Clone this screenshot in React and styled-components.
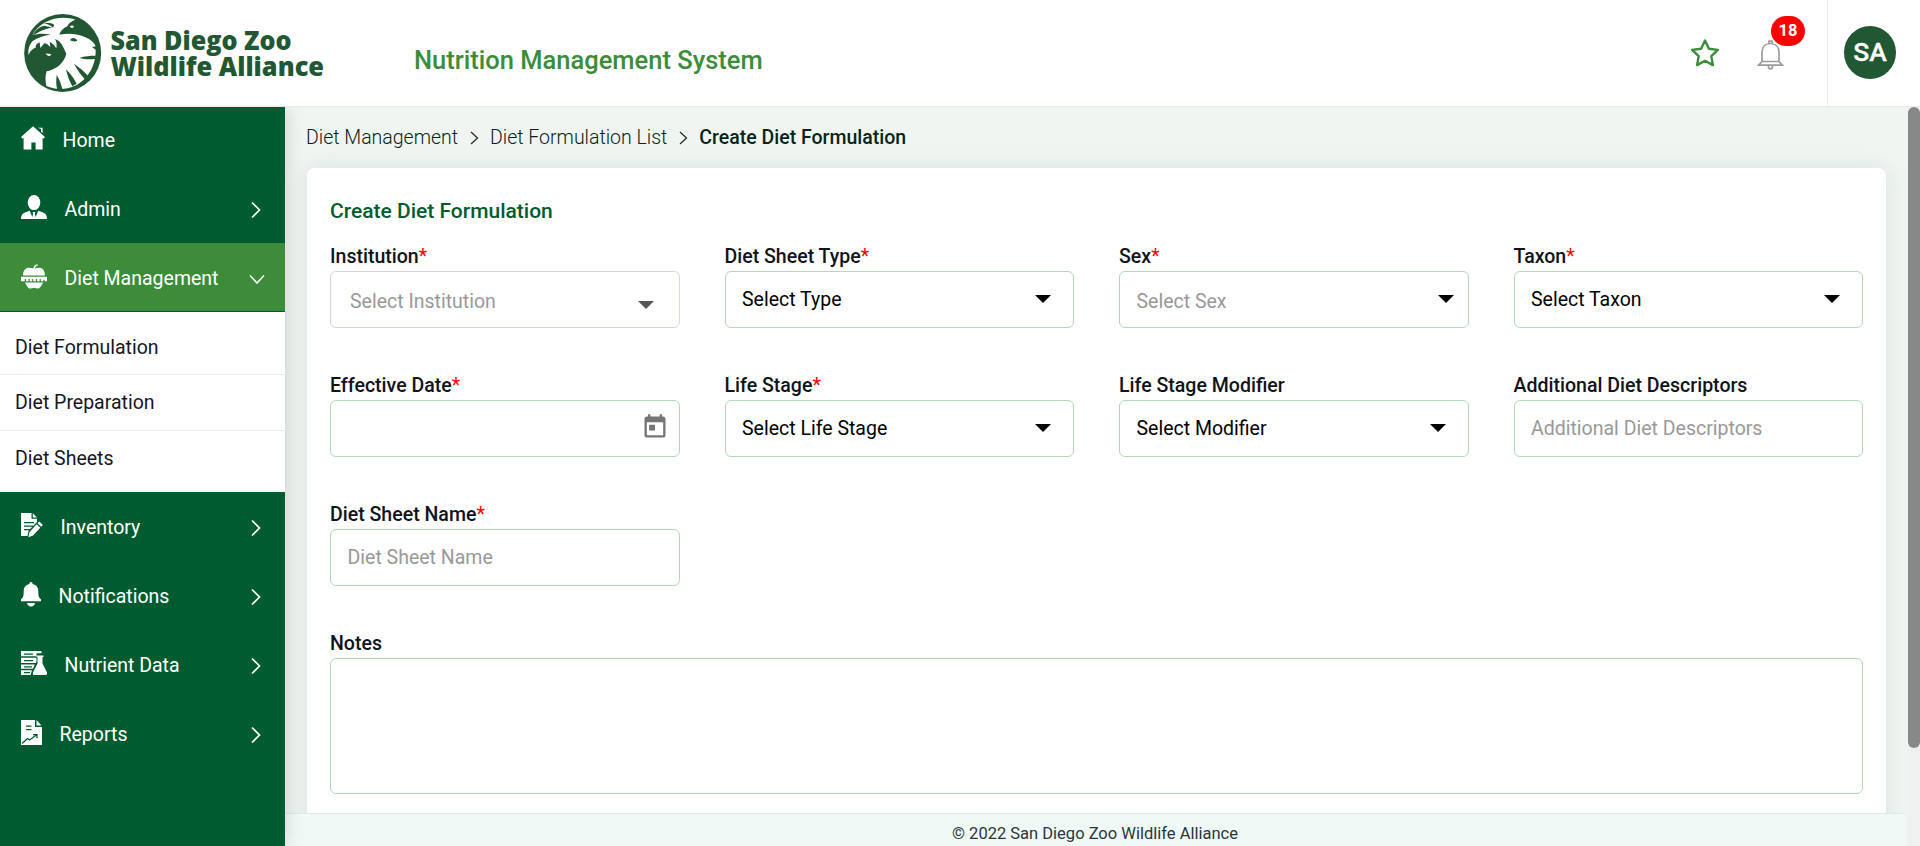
import React from "react";
import styled, { createGlobalStyle } from "styled-components";

const Global = createGlobalStyle`
  *, *::before, *::after { box-sizing: border-box; }
  html, body { margin: 0; padding: 0; background: #fff; overflow: hidden; }
  body { font-family: Roboto, "Liberation Sans", sans-serif; font-size: 20px; line-height: 24px; color: #0b1a14; }
`;

const Page = styled.div`
  width: 100%;
  height: 846px;
  display: flex;
  flex-direction: column;
  overflow: hidden;
`;

const Header = styled.header`
  height: 107px;
  flex: none;
  display: flex;
  align-items: flex-start;
  background: #fff;
  border-bottom: 1px solid #e8e8e8;
`;

const Logo = styled.svg`
  display: block;
  flex: none;
  width: 305px;
  height: 80px;
  margin: 13px 0 0 23px;
  overflow: visible;
`;

const SystemName = styled.h1`
  margin: 43px 0 0 86px;
  font-size: 25.5px;
  line-height: 34px;
  font-weight: 500;
  color: #3c8c3a;
`;

const HeaderTools = styled.div`
  margin-left: auto;
  display: flex;
  height: 105px;
`;

const StarIcon = styled.svg`
  display: block;
  width: 30px;
  height: 30px;
  margin: 38px 37px 0 0;
`;

const BellButton = styled.div`
  position: relative;
  width: 28px;
  height: 32px;
  margin: 39px 42px 0 0;
  svg { display: block; }
`;

const Badge = styled.span`
  position: absolute;
  left: 14px;
  top: -23px;
  width: 34px;
  height: 30px;
  border-radius: 15px;
  background: #ff0000;
  color: #fff;
  font-size: 16.5px;
  font-weight: 700;
  line-height: 29px;
  text-align: center;
`;

const AvatarCell = styled.div`
  width: 93px;
  border-left: 1px solid #ebebeb;
  padding: 26px 0 0 16px;
`;

const Avatar = styled.div`
  width: 52px;
  height: 53px;
  border-radius: 50%;
  background: #215732;
  color: #fff;
  font-size: 26.5px;
  font-weight: 500;
  -webkit-text-stroke: 0.3px #fff;
  line-height: 52px;
  text-align: center;
`;

const Body = styled.div`
  flex: 1;
  min-height: 0;
  display: flex;
`;

const Sidebar = styled.nav`
  position: relative;
  z-index: 2;
  width: 285px;
  flex: none;
  background: #005c30;
  box-shadow: 0 0 18px rgba(0, 0, 0, 0.16);
  clip-path: inset(0 -30px 0 0);
`;

const NavItem = styled.div`
  height: ${(p) => (p.$first ? 67 : 69)}px;
  display: flex;
  align-items: flex-start;
  padding: ${(p) => (p.$first ? 22 : 24)}px 0 0 21px;
  background: ${(p) => (p.$active ? "#3c8c3a" : "transparent")};
  border-bottom: 1px solid #005c30;
  color: #fff;
  font-size: 19.5px;
`;

const NavIcon = styled.svg`
  display: block;
  flex: none;
  margin: -3px 17.5px 0 0;
  fill: #fff;
`;

const NavLabel = styled.span`
  flex: 1;
`;

const Chevron = styled.svg`
  display: block;
  flex: none;
  width: 16px;
  height: 18px;
  margin: ${(p) => (p.$open ? "6px 20px 0 0" : "3px 21px 0 0")};
  fill: none;
  stroke: #fff;
  stroke-width: 1.6;
`;

const SubMenu = styled.div`
  height: 180px;
  background: #fff;
  padding-top: 7px;
`;

const SubItem = styled.div`
  height: 56px;
  padding: ${(p) => (p.$first ? 17 : 16)}px 0 0 15px;
  color: #17171f;
  font-size: 19.5px;
  border-bottom: 1px solid ${(p) => (p.$last ? "transparent" : "#e9ebea")};
`;

const Main = styled.main`
  flex: 1;
  min-width: 0;
  display: flex;
  flex-direction: column;
  background: #f0f5f1;
`;

const Scroll = styled.div`
  flex: 1;
  min-height: 0;
  overflow: hidden;
  padding: 19px 22px 0 22px;
`;

const Crumbs = styled.div`
  display: flex;
  align-items: center;
  height: 24px;
  margin-left: -1px;
  font-size: 19.5px;
  font-weight: 300;
  color: #05251b;
  b { font-weight: 500; }
`;

const CrumbChevron = styled.svg`
  display: block;
  width: 9px;
  height: 14px;
  margin: 0 11px 0 12px;
  fill: none;
  stroke: #1c332a;
  stroke-width: 1.3;
`;

const Card = styled.section`
  margin-top: 18px;
  height: 900px;
  background: #fff;
  border-radius: 8px;
  padding: 30px 23px 0;
  box-shadow: 0 0 24px rgba(120, 160, 170, 0.2);
`;

const CardTitle = styled.h2`
  margin: 0;
  font-size: 21px;
  line-height: 26px;
  font-weight: 500;
  color: #005c30;
`;

const Grid = styled.div`
  display: grid;
  grid-template-columns: repeat(4, 1fr);
  column-gap: 45px;
  grid-auto-rows: 129px;
  margin-top: 20px;
`;

const Label = styled.label`
  display: block;
  height: 27px;
  padding-top: 1px;
  font-size: 19.55px;
  font-weight: 500;
  color: #10131a;
  span { color: #ff0000; font-weight: 400; }
`;

const Control = styled.div`
  height: ${(p) => p.$h || 57}px;
  display: flex;
  align-items: flex-start;
  justify-content: space-between;
  background: #fff;
  border: 1px solid ${(p) => p.$border || "#b5d6b9"};
  border-radius: 6px;
  padding: ${(p) => p.$top || 16}px ${(p) => p.$right || 22}px 0 ${(p) => p.$left || 16.5}px;
  font-size: 19.5px;
  color: ${(p) => (p.$muted ? "#999" : "#000")};
`;

const Caret = styled.svg`
  display: block;
  width: 16px;
  height: 8px;
  margin-top: ${(p) => p.$drop || 7}px;
  fill: ${(p) => p.$fill || "#000"};
`;

const CalendarIcon = styled.svg`
  display: block;
  width: 28px;
  height: 28px;
  margin: -4px 0 0 auto;
  fill: #757575;
`;

const Footer = styled.footer`
  position: relative;
  height: 33px;
  flex: none;
  margin-right: 3px;
  background: #f0f9f5;
  border-top: 1px solid #e2ebe7;
  text-align: center;
  font-size: 16.5px;
  line-height: 39px;
  color: #2b3540;
`;

const ScrollTrack = styled.div`
  width: 12px;
  flex: none;
  background: #f0f0f0;
`;

const ScrollThumb = styled.div`
  height: 641px;
  border-radius: 6px;
  background: #888;
`;

const icons = {
  home: [24, 24, (
    <>
      <path d="M12 .3 24 11l-1.4 1.7-1-.9V23.500h-7V16.500h-4.200v7H2.600V11.800l-1 .9L0 11z" />
      <path d="M16.600 1.700H21.600V7.200l-1.600-1.500V3z" />
    </>
  )],
  user: [26, 24, (
    <>
      <ellipse cx="13" cy="7.600" rx="6.300" ry="7.500" />
      <path d="M0 24c.1-4 1.500-5.800 4.500-6.800l4.200-1.500L11.300 22l.9-3.500-.8-1.500h3.200l-.8 1.500.9 3.500 2.600-6.300 4.200 1.500c3 1 4.400 2.800 4.500 6.800z" />
    </>
  )],
  apple: [26, 25, (
    <>
      <path d="M12.300 4.500C12.600 2 14 .4 16.500.2l.4 1.300c-1.800.3-2.700 1.300-2.900 3 4.500-2 9.300-.7 9.800 5.300v1.600H2.100V9.800c.5-6 5.700-7.300 10.200-5.300z" />
      <path d="M0 12.700h26v4.600h-2.500v-1.500h-1.200v1.500h-2.500v-2.300h-1.200v2.300h-2.500v-2.300h-1.200v2.300h-2.500v-2.300h-1.200v2.300H8.700v-2.300H7.500v2.300H5v-2.300H3.800v2.300H0z" />
      <path d="M4 18.600h18c-.8 2.200-2 4-4 5.700-1.500.7-3-.1-5-.5-2 .4-3.500 1.200-5 .5-2-1.700-3.200-3.500-4-5.700z" />
    </>
  )],
  inventory: [22, 25, (
    <>
      <path d="M0 0h10.500v5.700H16V9l-8.400 8.600L6.500 23H0z" />
      <path d="M11.800.2 16 4.500h-4.200z" />
      <path d="M3 9h10v1.200H3zM3 12.500h9v1.200H3zM3 16h6v1.200H3z" fill="#005c30" />
      <path d="m18.300 8.500 3.600 3.500-1.700 1.800-3.700-3.500zM15.600 11.200l3.700 3.600-7.300 7.700-4.600 1.800 1-5z" />
    </>
  )],
  bell: [20, 25, (
    <>
      <path d="M10 0c1 0 1.600.7 1.600 2 3.900.8 5.700 3.600 5.700 7.500 0 4.500.5 6 2.700 7.800v2H0v-2c2.200-1.800 2.700-3.300 2.700-7.800C2.700 5.600 4.500 2.800 8.400 2c0-1.300.6-2 1.600-2z" />
      <path d="M6 21h8c-.4 2.300-1.800 3.500-4 3.500S6.400 23.300 6 21z" />
    </>
  )],
  nutrient: [26, 24, (
    <>
      <path d="M0 0h20.500v2.300h-5v2.900H0zM0 6.800h15.500v3.500L14.800 12H0zM0 13.600h13.800L12 17.800H0zM0 19.300h11L9.500 24H0z" />
      <path d="M3 2.500h9v1.200H3zM3 9h9v1.200H3zM3 15.300h8v1.200H3zM3 21h6v1.200H3z" fill="#005c30" />
      <path d="M15.500 4.500h7V6h-1v6.500L26 21.500c.5 1.500-.2 2.500-1.500 2.500h-11c-1.300 0-2-1-1.500-2.500l4.500-9V6h-1z" />
    </>
  )],
  reports: [21, 25, (
    <>
      <path d="M0 0h14v7h7v18H0z" />
      <path d="M15.500 0 20.500 5.500h-5z" />
      <path d="M5 5.500h5.500v1.300H5zM5 9h5.500v1.300H5z" fill="#005c30" />
      <path d="m1 23.500 5.500-5L8.500 20l7-5M12 14.600h4v3.600" fill="none" stroke="#005c30" strokeWidth="1.300" />
    </>
  )],
};

function Nav({ icon, label, active, first, chevron, open }) {
  const [w, h, art] = icons[icon];
  return (
    <NavItem $active={active} $first={first}>
      <NavIcon width={w} height={h} viewBox={`0 0 ${w} ${h}`}>{art}</NavIcon>
      <NavLabel>{label}</NavLabel>
      {chevron && (
        <Chevron $open={open} viewBox="0 0 16 18">
          <path d={open ? "M1 2.500 8 10l7-7.500" : "M4 1.500 11.500 9 4 16.500"} />
        </Chevron>
      )}
    </NavItem>
  );
}

function Field({ label, required, text, muted, caret, caretFill, drop, border, top, left, right, children }) {
  return (
    <div>
      <Label>{label}{required && <span>*</span>}</Label>
      <Control $muted={muted} $border={border} $top={top} $left={left} $right={right}>
        {text}
        {caret && (
          <Caret $drop={drop} $fill={caretFill} viewBox="0 0 16 8"><path d="M0 0h16L8 8z" /></Caret>
        )}
        {children}
      </Control>
    </div>
  );
}

function BrandLogo() {
  return (
    <Logo viewBox="23 13 305 80">
      <g transform="scale(.33333)">
        <ellipse cx="188" cy="159" rx="115.500" ry="117" fill="#215732" />
        <path fill="#fff" d="M99 101C114 78 136 63 164 56c26-5 46-2 62 3-12 4-21 11-24 20-12 5-21 14-24 25 30-5 58-2 78 8 16 7 27 16 31 27l-11 2 11 8c1 34-12 68-36 90-22 22-66 39-112 19-3-17-4-30 1-44 28-6 52-24 59-52-6-14-11-28-22-39l-12-6c5 9 6 18 4 28-6-10-12-16-20-20l2 16c-8-8-12-11-18-11l-12 14-2-17c-10 5-12 8-12 16-8 2-16 8-21 22-3-14 1-30 12-42 14-10 34-17 54-19-18-4-40-4-54 2z" />
        <path fill="#215732" d="M97 108c8-18 22-29 36-31l27 6c-12-8-20-12-29-13 20-4 38 2 29 10-16 6-37 9-63 28z" />
        <path fill="#215732" d="M210 121c4-9 17-9 22 1-5 3-15 3-22-1z" />
        <path fill="#fff" d="M137 160c7 2 13 2 17 3-3 7-12 8-17-3zM209 79c5-4 11-3 13 1-4 5-9 5-13-1z" />
        <path fill="#215732" d="M238 174c16-6 32-7 50-7l-3 10c-18 2-32 1-47-3zM222 191c16 11 32 24 46 41l-9 11c-14-16-27-32-37-52zM198 208c13 13 24 27 32 43l-13 8c-9-15-15-32-19-51zM170 225c8 12 13 26 17 42l-15 2c-4-14-4-28-2-44z" />
      </g>
      <g fill="#215732" fontFamily="Open Sans, sans-serif" fontWeight="800" fontSize="26.500">
        <text x="110.500" y="49.700" textLength="181" lengthAdjust="spacingAndGlyphs">San Diego Zoo</text>
        <text x="110.500" y="76" textLength="213.500" lengthAdjust="spacingAndGlyphs">Wildlife Alliance</text>
      </g>
    </Logo>
  );
}

const CrumbSep = () => (
  <CrumbChevron viewBox="0 0 9 14"><path d="M1 1l6.500 6L1 13" /></CrumbChevron>
);

export default function App() {
  return (
    <>
      <Global />
      <Page>
        <Header>
          <BrandLogo />
          <SystemName>Nutrition Management System</SystemName>
          <HeaderTools>
            <StarIcon viewBox="0 0 30 30">
              <path d="M15 2.500l3.900 8.200 9 1.200-6.600 6.200 1.600 9L15 22.700l-7.900 4.400 1.600-9L2.100 11.900l9-1.200z" fill="none" stroke="#3c8c3a" strokeWidth="2.400" strokeLinejoin="round" />
            </StarIcon>
            <BellButton>
              <svg width="28" height="32" viewBox="0 0 28 32" fill="none" stroke="#9c9c9c" strokeWidth="1.700">
                <path d="M5 22.500V13.500C5 7.500 8.500 4.500 13.500 4.500S22 7.500 22 13.500v9M5 22.500h17M5 22.500l-3.500 3.700h24L22 22.500M12 4.500V2h3v2.500M11.300 26.500c0 4.500 4.400 4.500 4.400 0" />
              </svg>
              <Badge>18</Badge>
            </BellButton>
            <AvatarCell><Avatar>SA</Avatar></AvatarCell>
          </HeaderTools>
        </Header>
        <Body>
          <Sidebar>
            <Nav icon="home" label="Home" first />
            <Nav icon="user" label="Admin" chevron />
            <Nav icon="apple" label="Diet Management" active chevron open />
            <SubMenu>
              <SubItem $first>Diet Formulation</SubItem>
              <SubItem>Diet Preparation</SubItem>
              <SubItem $last>Diet Sheets</SubItem>
            </SubMenu>
            <Nav icon="inventory" label="Inventory" chevron />
            <Nav icon="bell" label="Notifications" chevron />
            <Nav icon="nutrient" label="Nutrient Data" chevron />
            <Nav icon="reports" label="Reports" chevron />
          </Sidebar>
          <Main>
            <Scroll>
              <Crumbs>
                Diet Management<CrumbSep />Diet Formulation List<CrumbSep /><b>Create Diet Formulation</b>
              </Crumbs>
              <Card>
                <CardTitle>Create Diet Formulation</CardTitle>
                <Grid>
                  <Field label="Institution" required text="Select Institution" muted caret caretFill="#555" drop={11} border="#d3d4ee" top={18} left={19} right={25} />
                  <Field label="Diet Sheet Type" required text="Select Type" caret />
                  <Field label="Sex" required text="Select Sex" muted caret drop={5} top={18} right={14} />
                  <Field label="Taxon" required text="Select Taxon" caret />
                  <Field label="Effective Date" required right={10}>
                    <CalendarIcon viewBox="0 0 24 24">
                      <path d="M19 3h-1V1h-2v2H8V1H6v2H5c-1.110 0-1.990.9-1.990 2L3 19c0 1.100.89 2 2 2h14c1.100 0 2-.9 2-2V5c0-1.100-.9-2-2-2zm0 16H5V8h14v11zM7 10h5v5H7z" />
                    </CalendarIcon>
                  </Field>
                  <Field label="Life Stage" required text="Select Life Stage" caret />
                  <Field label="Life Stage Modifier" text="Select Modifier" caret />
                  <Field label="Additional Diet Descriptors" text="Additional Diet Descriptors" muted />
                  <Field label="Diet Sheet Name" required text="Diet Sheet Name" muted />
                </Grid>
                <Label>Notes</Label>
                <Control $h={136} />
              </Card>
            </Scroll>
            <Footer>© 2022 San Diego Zoo Wildlife Alliance</Footer>
          </Main>
          <ScrollTrack><ScrollThumb /></ScrollTrack>
        </Body>
      </Page>
    </>
  );
}
